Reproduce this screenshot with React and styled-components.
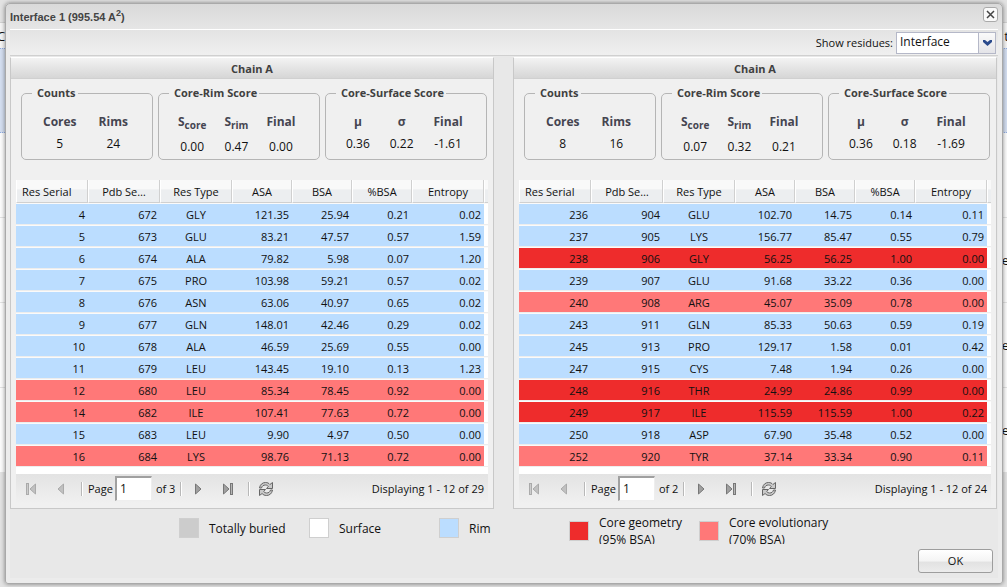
import React, { useState } from "react";
import styled, { createGlobalStyle } from "styled-components";

const GlobalStyle = createGlobalStyle`
  * { box-sizing: border-box; }
  body {
    margin: 0;
    font-family: "Open Sans", "Noto Sans", sans-serif;
    font-size: 11px;
    color: #111;
    background: #e0e0e0;
  }
  button, input, select { font-family: inherit; color: inherit; margin: 0; }
`;

const FILLS = { rim: "#bbddff", geometry: "#ee2c2c", evolutionary: "#ff7878", buried: "#cccccc", surface: "#ffffff" };

const Page = styled.div`
  position: relative;
  min-height: 100vh;
  padding: 3px 4px 3px 5px;
`;

const Backdrop = styled.div`
  position: absolute;
  inset: 0;
  overflow: hidden;
  padding-top: 22px;
  background: #e2e2e2;
`;

const BackHeader = styled.div`
  display: flex;
  justify-content: space-between;
  align-items: center;
  height: 26px;
  margin: 0 -2px 0 -3px;
  background: #f4f4f4;
  border-top: 1px solid #d0d0d0;
  font-size: 13px;
`;

const BackRow = styled.div`
  display: flex;
  justify-content: flex-end;
  align-items: center;
  height: 85px;
  margin-right: -2px;
  font-size: 13px;
  background: ${(p) => (p.$selected ? "#d3def0" : "#fbfbfb")};
  border-bottom: 1px ${(p) => (p.$selected ? "dotted #8fabe0" : "solid #e2e2e2")};
  border-top: ${(p) => (p.$selected ? "1px dotted #8fabe0" : "0")};
`;

const Dialog = styled.section`
  position: relative;
  border: 1px solid #a9a9a9;
  border-radius: 5px 5px 3px 3px;
  background: linear-gradient(#d9d9d9, #e6e6e6 26px, #ececec 27px);
  box-shadow: 0 0 4px rgba(0, 0, 0, 0.45);
  padding: 0 4px 5px;
`;

const TitleBar = styled.header`
  display: flex;
  justify-content: space-between;
  align-items: center;
  height: 25px;
`;

const Title = styled.h1`
  margin: 0;
  font: bold 11px/16px "Liberation Sans", Arial, sans-serif;
  color: #444;
  sup { font-size: 9px; line-height: 0; }
`;

const CloseButton = styled.button`
  display: flex;
  align-items: center;
  justify-content: center;
  align-self: flex-start;
  width: 15px;
  height: 15px;
  margin-top: 3px;
  padding: 0;
  border: 1px solid #aaa;
  border-radius: 3px;
  background: #fafafa;
`;

const Body = styled.div`
  background: #e8e8e8;
`;

const Toolbar = styled.div`
  display: flex;
  justify-content: flex-end;
  align-items: center;
  height: 27px;
  padding: 0 2px 0 0;
  border-top: 1px solid #fff;
  border-bottom: 1px solid #d0d0d0;
  background: linear-gradient(#e3e3e3, #f0f0f0);
  label { padding-right: 3px; }
`;

const SelectBox = styled.div`
  position: relative;
  width: 100px;
  height: 22px;
`;

const Select = styled.select`
  appearance: none;
  width: 100%;
  height: 100%;
  padding: 0 20px 2px 3px;
  border: 1px solid #b5b8c8;
  border-radius: 0;
  background: #fff;
  font-size: 12px;
`;

const SelectArrow = styled.span`
  position: absolute;
  top: 1px;
  right: 1px;
  bottom: 1px;
  width: 17px;
  display: flex;
  align-items: center;
  justify-content: center;
  border-left: 1px solid #b5b8c8;
  background: linear-gradient(#fafafa, #e4e4e8);
  pointer-events: none;
`;

const Panels = styled.div`
  display: grid;
  grid-template-columns: 1fr 1fr;
  gap: 19px;
  padding: 1px 2px 0 0;
`;

const Panel = styled.section`
  border: 1px solid #c8c8c8;
  border-top-color: #fff;
  background: #f0f0f0;
  padding-bottom: 5px;
`;

const PanelTitle = styled.h2`
  margin: 0;
  height: 21px;
  border-bottom: 1px solid #d0d0d0;
  background: linear-gradient(#f3f3f3, #d6d6d6);
  font-size: 11px;
  line-height: 21px;
  text-align: center;
  color: #404040;
`;

const Scores = styled.div`
  display: grid;
  grid-template-columns: 132fr 162fr 162fr;
  gap: 5px;
  padding: 7px 6px 20px 10px;
`;

const ScoreBox = styled.fieldset`
  min-width: 0;
  height: 74px;
  margin: 0;
  padding: 0 10px;
  border: 1px solid #b5b5b5;
  border-radius: 5px;
  legend {
    padding: 0 2px 0 5px;
    font-weight: bold;
    line-height: 14px;
    color: #404040;
  }
`;

const ScoreTable = styled.table`
  border-spacing: 0;
  margin-top: 11px;
  font-size: 12px;
  th, td {
    padding: 3px ${(p) => p.$gap}px;
    text-align: center;
    vertical-align: top;
    line-height: 16px;
    white-space: nowrap;
  }
  th { color: #454550; }
  sub { font-size: 10px; }
`;

const Grid = styled.div`
  margin: 0 5px;
  padding-bottom: 7px;
  background: #fff;
`;

const DataTable = styled.table`
  width: 100%;
  table-layout: fixed;
  border-spacing: 0;
`;

const HeadCell = styled.th`
  height: 23px;
  padding: 0 5px;
  font-weight: normal;
  text-align: ${(p) => p.$align || "center"};
  border-right: 1px solid #d0d0d0;
  border-bottom: 1px solid #d0d0d0;
  border-left: 1px solid #fff;
  background: linear-gradient(#f9f9f9 40%, #eceef0 45%, #eceef0);
  white-space: nowrap;
  &:empty { padding: 0; border-right: 0; }
`;

const DataRow = styled.tr`
  td {
    height: 22px;
    padding: 2px 3px 0;
    text-align: right;
    line-height: 16px;
    border-top: 1px solid #fafafa;
    border-bottom: 1px solid #ededed;
    background: ${(p) => FILLS[p.$kind]};
    background-clip: padding-box;
  }
  td:nth-child(3) { text-align: center; }
  td:empty { padding: 0; background: #fff; }
`;

const Pager = styled.nav`
  display: flex;
  align-items: center;
  height: 29px;
  margin: 0 5px;
  padding: 0 4px;
  background: linear-gradient(#e3e3e3, #f0f0f0);
`;

const PagerButton = styled.button`
  display: flex;
  align-items: center;
  justify-content: center;
  width: 22px;
  height: 22px;
  padding: 0;
  border: 0;
  background: none;
  opacity: ${(p) => (p.disabled ? 0.55 : 1)};
  & + & { margin-left: 8px; }
`;

const Separator = styled.span`
  width: 2px;
  height: 14px;
  margin: 0 5px 0 ${(p) => (p.$tight ? 5 : 9)}px;
  border-left: 1px solid #b8b8b8;
  border-right: 1px solid #fff;
`;

const PageLabel = styled.label`
  display: flex;
  align-items: center;
  gap: 2px;
`;

const PageInput = styled.input`
  width: 37px;
  height: 25px;
  padding: 0 3px 2px;
  border: 2px solid #a0a0a0;
  border-right: 1px solid #eee;
  border-bottom: 1px solid #eee;
  background: #fff;
  font-size: 12px;
`;

const PageCount = styled.span`
  margin-left: 4px;
`;

const Status = styled.span`
  margin-left: auto;
`;

const Key = styled.ul`
  display: flex;
  justify-content: center;
  align-items: flex-start;
  height: 30px;
  margin: 5px 0 0;
  padding: 0;
  overflow: hidden;
  list-style: none;
`;

const KeyItem = styled.li`
  display: flex;
  align-items: center;
  gap: 10px;
  width: 130px;
  min-height: 28px;
  font-size: 12px;
  line-height: 17px;
  white-space: pre-line;
`;

const Swatch = styled.span`
  flex: none;
  width: 20px;
  height: 20px;
  border: 1px solid #cfcfcf;
  background: ${(p) => FILLS[p.$kind]};
`;

const Actions = styled.footer`
  display: flex;
  justify-content: flex-end;
  padding: 5px;
`;

const OkButton = styled.button`
  width: 75px;
  height: 24px;
  padding: 0 0 1px;
  border: 1px solid #9d9d9d;
  border-radius: 3px;
  background: linear-gradient(#fff, #f4f4f4 50%, #e2e2e2 55%, #ececec);
  font-size: 11px;
`;

const FirstIcon = ({ flip }) => (
  <svg width="12" height="12" viewBox="0 0 12 12" transform={flip ? "scale(-1 1)" : undefined}>
    <rect x="1.5" y="0.5" width="2" height="11" fill="#b5b5b5" stroke="#777" />
    <path d="M10.5 1v10L5 6z" fill="#a0a0a0" stroke="#777" />
  </svg>
);

const StepIcon = ({ flip }) => (
  <svg width="8" height="12" viewBox="0 0 8 12" transform={flip ? "scale(-1 1)" : undefined}>
    <path d="M6.5 1v10L1 6z" fill="#a0a0a0" stroke="#777" />
  </svg>
);

const RefreshIcon = () => (
  <svg width="16" height="16" viewBox="0 0 16 16" strokeLinejoin="round">
    <path d="M1.500 7C2 3.500 4.500 1.500 7.500 1.500c2 0 3.300.7 4.400 2L14.500 1.500V7.500H8.500l1.800-2C9.500 4.500 8.700 4 7.500 4 5.500 4 4 5 3.500 7z" fill="#c9c9c9" stroke="#666" />
    <path d="M14.500 9c-.5 3.500-3 5.500-6 5.500-2 0-3.300-.7-4.400-2L1.500 14.500V8.500h6l-1.800 2c.8 1 1.600 1.500 2.800 1.500 2 0 3.500-1 4-3z" fill="#c9c9c9" stroke="#666" />
  </svg>
);

const COLUMNS = [
  ["Res Serial", 72], ["Pdb Se…", 72], ["Res Type", 72], ["ASA", 60], ["BSA", 60], ["%BSA", 60], ["Entropy", 72],
];

const LEFT = {
  id: "left", pages: 3, total: 29, counts: ["5", "24"], rim: ["0.00", "0.47", "0.00"], surface: ["0.36", "0.22", "-1.61"],
  rows: [
    ["rim", "4 672 GLY 121.35 25.94 0.21 0.02"],
    ["rim", "5 673 GLU 83.21 47.57 0.57 1.59"],
    ["rim", "6 674 ALA 79.82 5.98 0.07 1.20"],
    ["rim", "7 675 PRO 103.98 59.21 0.57 0.02"],
    ["rim", "8 676 ASN 63.06 40.97 0.65 0.02"],
    ["rim", "9 677 GLN 148.01 42.46 0.29 0.02"],
    ["rim", "10 678 ALA 46.59 25.69 0.55 0.00"],
    ["rim", "11 679 LEU 143.45 19.10 0.13 1.23"],
    ["evolutionary", "12 680 LEU 85.34 78.45 0.92 0.00"],
    ["evolutionary", "14 682 ILE 107.41 77.63 0.72 0.00"],
    ["rim", "15 683 LEU 9.90 4.97 0.50 0.00"],
    ["evolutionary", "16 684 LYS 98.76 71.13 0.72 0.00"],
  ],
};

const RIGHT = {
  id: "right", pages: 2, total: 24, counts: ["8", "16"], rim: ["0.07", "0.32", "0.21"], surface: ["0.36", "0.18", "-1.69"],
  rows: [
    ["rim", "236 904 GLU 102.70 14.75 0.14 0.11"],
    ["rim", "237 905 LYS 156.77 85.47 0.55 0.79"],
    ["geometry", "238 906 GLY 56.25 56.25 1.00 0.00"],
    ["rim", "239 907 GLU 91.68 33.22 0.36 0.00"],
    ["evolutionary", "240 908 ARG 45.07 35.09 0.78 0.00"],
    ["rim", "243 911 GLN 85.33 50.63 0.59 0.19"],
    ["rim", "245 913 PRO 129.17 1.58 0.01 0.42"],
    ["rim", "247 915 CYS 7.48 1.94 0.26 0.00"],
    ["geometry", "248 916 THR 24.99 24.86 0.99 0.00"],
    ["geometry", "249 917 ILE 115.59 115.59 1.00 0.22"],
    ["rim", "250 918 ASP 67.90 35.48 0.52 0.00"],
    ["evolutionary", "252 920 TYR 37.14 33.34 0.90 0.11"],
  ],
};

const KEY = [
  ["buried", "Totally buried"],
  ["surface", "Surface"],
  ["rim", "Rim"],
  ["geometry", "Core geometry\n(95% BSA)"],
  ["evolutionary", "Core evolutionary\n(70% BSA)"],
];

function ScoreGroup({ title, heads, values, gap }) {
  return (
    <ScoreBox>
      <legend>{title}</legend>
      <ScoreTable $gap={gap}>
        <thead><tr>{heads.map((h, i) => <th key={i} scope="col">{h}</th>)}</tr></thead>
        <tbody><tr>{values.map((v, i) => <td key={i}>{v}</td>)}</tr></tbody>
      </ScoreTable>
    </ScoreBox>
  );
}

function ResiduePanel({ data }) {
  const [page, setPage] = useState("1");
  const inputId = `page-${data.id}`;
  return (
    <Panel>
      <PanelTitle>Chain A</PanelTitle>
      <Scores>
        <ScoreGroup title="Counts" heads={["Cores", "Rims"]} values={data.counts} gap={11} />
        <ScoreGroup title="Core-Rim Score" heads={[<>S<sub>core</sub></>, <>S<sub>rim</sub></>, "Final"]} values={data.rim} gap={9} />
        <ScoreGroup title="Core-Surface Score" heads={["μ", "σ", "Final"]} values={data.surface} gap={10} />
      </Scores>
      <Grid>
        <DataTable>
          <colgroup>
            {COLUMNS.map(([name, width]) => <col key={name} width={width} />)}
            <col width={4} />
          </colgroup>
          <thead>
            <tr>
              {COLUMNS.map(([name], i) => <HeadCell key={name} scope="col" $align={i ? "center" : "left"}>{name}</HeadCell>)}
              <HeadCell as="td" />
            </tr>
          </thead>
          <tbody>
            {data.rows.map(([kind, line]) => (
              <DataRow key={line} $kind={kind}>
                {line.split(" ").map((value, i) => <td key={i}>{value}</td>)}
                <td />
              </DataRow>
            ))}
          </tbody>
        </DataTable>
      </Grid>
      <Pager aria-label="Pages">
        <PagerButton disabled aria-label="First page"><FirstIcon /></PagerButton>
        <PagerButton disabled aria-label="Previous page"><StepIcon /></PagerButton>
        <Separator />
        <PageLabel htmlFor={inputId}>
          Page
          <PageInput id={inputId} value={page} onChange={(e) => setPage(e.target.value)} />
        </PageLabel>
        <PageCount>of {data.pages}</PageCount>
        <Separator $tight />
        <PagerButton aria-label="Next page"><StepIcon flip /></PagerButton>
        <PagerButton aria-label="Last page"><FirstIcon flip /></PagerButton>
        <Separator />
        <PagerButton aria-label="Refresh"><RefreshIcon /></PagerButton>
        <Status>Displaying 1 - 12 of {data.total}</Status>
      </Pager>
    </Panel>
  );
}

export default function App() {
  return (
    <Page>
      <GlobalStyle />
      <Backdrop aria-hidden="true">
        <BackHeader><span>C</span><span>t</span></BackHeader>
        <BackRow $selected />
        <BackRow />
        <BackRow>e</BackRow>
        <BackRow>e</BackRow>
        <BackRow>e</BackRow>
      </Backdrop>
      <Dialog role="dialog" aria-labelledby="dialog-title">
        <TitleBar>
          <Title id="dialog-title">Interface 1 (995.54 A<sup>2</sup>)</Title>
          <CloseButton aria-label="Close">
            <svg width="9" height="9" viewBox="0 0 9 9" stroke="#444" strokeWidth="1.5"><path d="M1 1l7 7M8 1l-7 7" /></svg>
          </CloseButton>
        </TitleBar>
        <Body>
          <Toolbar>
            <label htmlFor="residues">Show residues:</label>
            <SelectBox>
              <Select id="residues" defaultValue="Interface">
                <option>Interface</option>
                <option>All</option>
              </Select>
              <SelectArrow>
                <svg width="9" height="6" viewBox="0 0 9 6"><path d="M0 0h2l2.500 2L7 0h2v2L4.500 6 0 2z" fill="#2a4a8c" /></svg>
              </SelectArrow>
            </SelectBox>
          </Toolbar>
          <Panels>
            <ResiduePanel data={LEFT} />
            <ResiduePanel data={RIGHT} />
          </Panels>
          <Key>
            {KEY.map(([kind, text]) => (
              <KeyItem key={kind}><Swatch $kind={kind} /><span>{text}</span></KeyItem>
            ))}
          </Key>
          <Actions><OkButton>OK</OkButton></Actions>
        </Body>
      </Dialog>
    </Page>
  );
}
